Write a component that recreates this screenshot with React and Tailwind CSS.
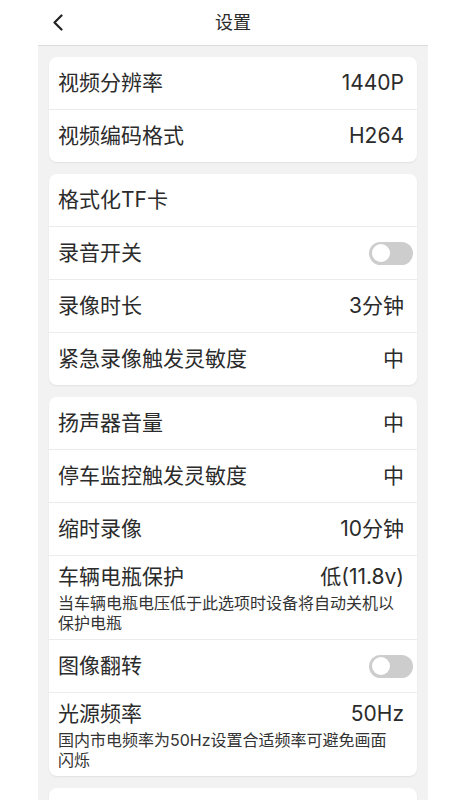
import React from "react";

const font = { fontFamily: 'Inter, "Noto Sans CJK SC", sans-serif' };

function Toggle() {
  return (
    <div className="-mr-[9px] flex h-[23px] w-[44px] items-center rounded-full bg-[#cdcdcd] px-[3px]">
      <div className="h-[18px] w-[18px] rounded-full bg-white" />
    </div>
  );
}

function Row({ label, value, toggle, note, first }) {
  return (
    <div
      className={
        "pl-[9px] pr-[13px] " +
        (first ? "" : "border-t border-[#ececec] ") +
        (note ? "pt-[8px] pb-[6px]" : first ? "flex h-[52px] items-center" : "flex h-[53px] items-center")
      }
    >
      <div className={"flex w-full items-center justify-between " + (note ? "h-[26px]" : "")}>
        <span className="text-[21px] text-[#2b2b2b]">{label}</span>
        {toggle ? (
          <Toggle />
        ) : (
          <span className="text-[21px] text-[#2b2b2b]">{value}</span>
        )}
      </div>
      {note && (
        <p className="mt-[3px] pr-[3px] text-[16px] leading-[20px] text-[#333]">
          {note}
        </p>
      )}
    </div>
  );
}

function Card({ rows }) {
  return (
    <div className="overflow-hidden rounded-lg bg-white shadow-[0_1px_2px_rgba(0,0,0,0.07)]">
      {rows.map((r, i) => (
        <Row key={i} first={i === 0} {...r} />
      ))}
    </div>
  );
}

export default function App() {
  return (
    <div className="min-h-[800px] bg-white" style={font}>
      <div className="ml-[38px] w-[390px]">
        <div className="relative flex h-[46px] items-center justify-center border-b border-[#dcdcdc] bg-white">
          <svg
            className="absolute left-[14px] top-[14px]"
            width="12"
            height="17"
            viewBox="0 0 12 17"
            fill="none"
          >
            <polyline
              points="9.5,1.5 2.5,8.5 9.5,15.5"
              stroke="#222"
              strokeWidth="2.2"
              strokeLinecap="round"
              strokeLinejoin="round"
            />
          </svg>
          <span className="text-[18px] text-[#2b2b2b]">设置</span>
        </div>
        <div className="flex min-h-[760px] flex-col gap-3 bg-[#f2f2f2] px-[11px] pt-[11px] pb-4">
          <Card
            rows={[
              { label: "视频分辨率", value: "1440P" },
              { label: "视频编码格式", value: "H264" },
            ]}
          />
          <Card
            rows={[
              { label: "格式化TF卡" },
              { label: "录音开关", toggle: true },
              { label: "录像时长", value: "3分钟" },
              { label: "紧急录像触发灵敏度", value: "中" },
            ]}
          />
          <Card
            rows={[
              { label: "扬声器音量", value: "中" },
              { label: "停车监控触发灵敏度", value: "中" },
              { label: "缩时录像", value: "10分钟" },
              {
                label: "车辆电瓶保护",
                value: "低(11.8v)",
                note: "当车辆电瓶电压低于此选项时设备将自动关机以保护电瓶",
              },
              { label: "图像翻转", toggle: true },
              {
                label: "光源频率",
                value: "50Hz",
                note: "国内市电频率为50Hz设置合适频率可避免画面闪烁",
              },
            ]}
          />
          <Card rows={[{ label: "" }, { label: "" }]} />
        </div>
      </div>
    </div>
  );
}
